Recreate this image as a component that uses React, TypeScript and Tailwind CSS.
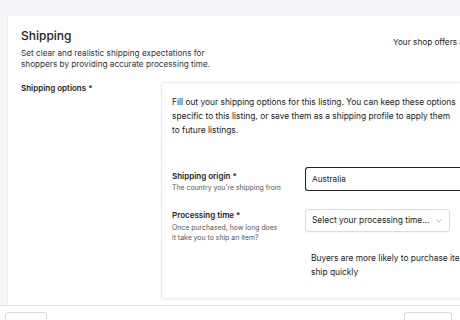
export default function App() {
  return (
    <div
      className="w-[460px] h-[320px] overflow-hidden bg-[#f4f4f9] flex flex-col text-[#222222]"
      style={{ fontFamily: "Inter, 'Noto Sans', sans-serif" }}
    >
      <div className="h-[16px] shrink-0" />
      <div className="ml-[7px] h-[289px] shrink-0 bg-white border-l border-[#ececf6] flex flex-col">
        <div className="flex justify-between pl-[13px] pt-[11px]">
          <div>
            <h1 className="text-[12px] leading-[18px] font-medium">Shipping</h1>
            <p className="mt-[3px] text-[8.2px] leading-[11px] w-[200px] text-[#333]">
              Set clear and realistic shipping expectations for shoppers by providing accurate processing time.
            </p>
          </div>
          <p className="mt-[10px] text-[8.2px] leading-[11px] whitespace-nowrap w-[67px] overflow-hidden">
            Your shop offers a
          </p>
        </div>
        <div className="flex mt-[12px] flex-1 min-w-0">
          <div className="w-[153px] shrink-0 pl-[13px] pt-[1px]">
            <p className="text-[8px] leading-[11px] font-semibold">Shipping options *</p>
          </div>
          <div className="flex-1 min-w-0 overflow-hidden mb-[6px] border-l border-t border-b border-[#ececec] rounded-l-[3px] shadow-[0_1px_3px_rgba(0,0,0,0.06)] pl-[10px] pt-[12px]">
            <p className="text-[8.4px] leading-[14px] whitespace-nowrap">
              Fill out your shipping options for this listing. You can keep these options
              <br />
              specific to this listing, or save them as a shipping profile to apply them
              <br />
              to future listings.
            </p>
            <div className="flex mt-[30px]">
              <div className="w-[133px] shrink-0 pt-[4px]">
                <p className="text-[8px] leading-[11px] font-semibold">Shipping origin *</p>
                <p className="text-[6.9px] leading-[12px] text-[#555] whitespace-nowrap">The country you're shipping from</p>
              </div>
              <div className="flex-1 h-[24px] border border-[#222] rounded-l-[3px] border-r-0 flex items-center pl-[6px]">
                <span className="text-[8.2px]">Australia</span>
              </div>
            </div>
            <div className="flex mt-[15px]">
              <div className="w-[133px] shrink-0 pt-[1px]">
                <p className="text-[8px] leading-[11px] font-semibold">Processing time *</p>
                <p className="text-[6.9px] leading-[10px] text-[#555] whitespace-nowrap mt-[2px]">
                  Once purchased, how long does
                  <br />
                  it take you to ship an item?
                </p>
              </div>
              <div className="flex flex-col shrink-0">
                <div className="w-[145px] h-[23px] border border-[#dcdcdc] rounded-[3px] flex items-center justify-between pl-[6px] pr-[7px] shadow-[0_1px_1px_rgba(0,0,0,0.04)]">
                  <span className="text-[8.4px]">Select your processing time...</span>
                  <svg width="6" height="4" viewBox="0 0 6 4" fill="none">
                    <path d="M0.5 0.5L3 3L5.5 0.5" stroke="#aaa" strokeWidth="0.8" />
                  </svg>
                </div>
                <p className="mt-[19px] pl-[6px] text-[8.4px] leading-[14px] whitespace-nowrap">
                  Buyers are more likely to purchase items that
                  <br />
                  ship quickly
                </p>
              </div>
            </div>
          </div>
        </div>
      </div>
      <div className="flex-1 bg-white border-t border-[#e4e4e4] flex items-start justify-between px-[5px] pt-[6px]">
        <div className="w-[42px] h-[24px] border border-[#d8d8d8] rounded-[3px] flex items-center justify-center text-[8px]">
          Cancel
        </div>
        <p className="text-[8px] mt-[6px] text-[#555]">This listing isn't active yet</p>
        <div className="w-[48px] h-[24px] border border-[#d8d8d8] rounded-[3px] flex items-center justify-center text-[8px] mr-[3px]">
          Preview
        </div>
      </div>
    </div>
  )
}
